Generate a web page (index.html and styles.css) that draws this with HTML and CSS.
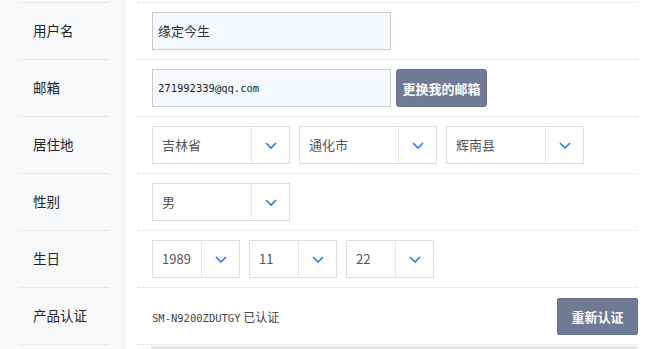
FILE: index.html
```html
<!DOCTYPE html>
<html lang="zh-CN">
<head>
    <meta charset="UTF-8">
    <meta name="viewport" content="width=device-width, initial-scale=1.0">
    <title>个人资料</title>
    <link rel="stylesheet" href="styles.css">
</head>
<body>
    <div class="form">
        <div class="row">
            <div class="label"><div class="cell">用户名</div></div>
            <div class="field"><div class="cell">
                <input class="text-input" type="text" value="缘定今生">
            </div></div>
        </div>

        <div class="row">
            <div class="label"><div class="cell">邮箱</div></div>
            <div class="field"><div class="cell">
                <input class="text-input mono" type="text" value="271992339@qq.com">
                <button class="btn btn-email">更换我的邮箱</button>
            </div></div>
        </div>

        <div class="row">
            <div class="label"><div class="cell">居住地</div></div>
            <div class="field"><div class="cell selects">
                <div class="select"><span class="value">吉林省</span><span class="arrow"><svg width="12" height="7" viewBox="0 0 12 7"><path d="M1 1l5 5 5-5" fill="none" stroke="#1a7ef0" stroke-width="1.6"/></svg></span></div>
                <div class="select"><span class="value">通化市</span><span class="arrow"><svg width="12" height="7" viewBox="0 0 12 7"><path d="M1 1l5 5 5-5" fill="none" stroke="#1a7ef0" stroke-width="1.6"/></svg></span></div>
                <div class="select"><span class="value">辉南县</span><span class="arrow"><svg width="12" height="7" viewBox="0 0 12 7"><path d="M1 1l5 5 5-5" fill="none" stroke="#1a7ef0" stroke-width="1.6"/></svg></span></div>
            </div></div>
        </div>

        <div class="row">
            <div class="label"><div class="cell">性别</div></div>
            <div class="field"><div class="cell selects">
                <div class="select"><span class="value">男</span><span class="arrow"><svg width="12" height="7" viewBox="0 0 12 7"><path d="M1 1l5 5 5-5" fill="none" stroke="#1a7ef0" stroke-width="1.6"/></svg></span></div>
            </div></div>
        </div>

        <div class="row">
            <div class="label"><div class="cell">生日</div></div>
            <div class="field"><div class="cell selects">
                <div class="select small"><span class="value">1989</span><span class="arrow"><svg width="12" height="7" viewBox="0 0 12 7"><path d="M1 1l5 5 5-5" fill="none" stroke="#1a7ef0" stroke-width="1.6"/></svg></span></div>
                <div class="select small"><span class="value">11</span><span class="arrow"><svg width="12" height="7" viewBox="0 0 12 7"><path d="M1 1l5 5 5-5" fill="none" stroke="#1a7ef0" stroke-width="1.6"/></svg></span></div>
                <div class="select small"><span class="value">22</span><span class="arrow"><svg width="12" height="7" viewBox="0 0 12 7"><path d="M1 1l5 5 5-5" fill="none" stroke="#1a7ef0" stroke-width="1.6"/></svg></span></div>
            </div></div>
        </div>

        <div class="row">
            <div class="label"><div class="cell">产品认证</div></div>
            <div class="field"><div class="cell spread">
                <span class="product"><span class="mono">SM-N9200ZDUTGY</span> 已认证</span>
                <button class="btn btn-verify">重新认证</button>
            </div></div>
        </div>

        <div class="row end">
            <div class="label"><div class="cell"></div></div>
            <div class="field"><div class="cell"><div class="bar"></div></div></div>
        </div>
    </div>
</body>
</html>
```

FILE: styles.css
```css
body {
    margin: 0;
    padding: 0;
    background-color: #ffffff;
    color: #333333;
    font-family: "Noto Sans CJK SC", "Noto Sans", sans-serif;
    overflow: hidden;
}

.form {
    width: 650px;
    padding-top: 2px;
    background: linear-gradient(to right, #f7f8fa 127px, #ffffff 127px);
}

.row {
    display: flex;
    height: 57px;
}

.row.end {
    height: 6px;
}

.label {
    width: 127px;
    padding: 0 18px 0 20px;
    box-sizing: border-box;
    background-color: #f7f8fa;
}

.field {
    flex: 1;
    padding: 0 12px 0 11px;
}

.cell {
    height: 100%;
    box-sizing: border-box;
    border-top: 1px dotted #d6d8dc;
    display: flex;
    align-items: center;
}

.label .cell {
    padding: 0 0 2px 13px;
    font-size: 13.5px;
    color: #222222;
}

.field .cell {
    padding-left: 14px;
}

.row.end .cell {
    align-items: flex-start;
}

.bar {
    width: 100%;
    height: 5px;
    margin: 1px 0 0 -1px;
    background-color: #e4e7ec;
}

.text-input {
    width: 239px;
    height: 38px;
    box-sizing: border-box;
    margin: 0;
    padding: 0 0 1px 5px;
    border: 1px solid #c7ccd4;
    background-color: #f5f8fd;
    color: #333333;
    font-family: "Noto Sans CJK SC", sans-serif;
    font-size: 13px;
    outline: none;
}

.mono {
    font-family: "DejaVu Sans Mono", "Noto Sans CJK SC", monospace;
    font-size: 10.5px;
}

.text-input.mono {
    font-size: 10.5px;
    color: #222222;
}

.btn {
    height: 38px;
    margin: 0;
    border: 1px solid #65718a;
    border-radius: 3px;
    background-color: #6f7b94;
    color: #ffffff;
    font-family: "Noto Sans CJK SC", sans-serif;
    font-size: 13px;
    font-weight: bold;
    cursor: pointer;
}

.btn-email {
    width: 91px;
    margin-left: 5px;
    padding: 0;
}

.btn-verify {
    width: 81px;
    height: 37px;
    padding: 0;
    border-radius: 2px;
}

.selects {
    gap: 9px;
}

.select {
    width: 138px;
    height: 38px;
    box-sizing: border-box;
    border: 1px solid #dcdde0;
    background-color: #ffffff;
    display: flex;
}

.select.small {
    width: 88px;
}

.select .value {
    flex: 1;
    display: flex;
    align-items: center;
    padding: 0 0 2px 9px;
    font-size: 13px;
    color: #555555;
}

.select .arrow {
    width: 37px;
    border-left: 1px solid #e6e7ea;
    display: flex;
    align-items: center;
    justify-content: center;
}

.spread {
    justify-content: space-between;
}

.product {
    font-size: 12px;
    color: #444444;
}
```
